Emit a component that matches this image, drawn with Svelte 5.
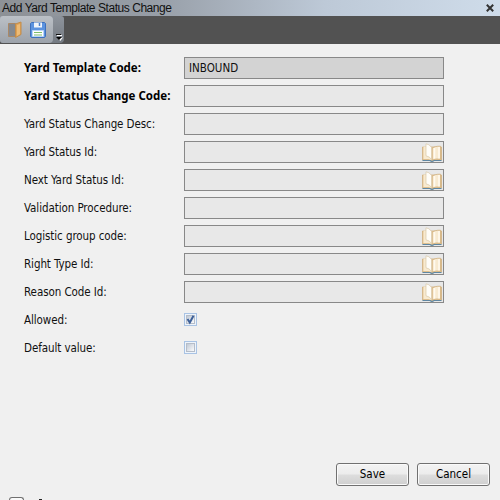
<script lang="ts">
type Field = { label: string; value?: string; bold?: boolean; readonly?: boolean; lookup?: boolean };

const fields: Field[] = [
  { label: 'Yard Template Code:', value: 'INBOUND', bold: true, readonly: true },
  { label: 'Yard Status Change Code:', bold: true },
  { label: 'Yard Status Change Desc:' },
  { label: 'Yard Status Id:', lookup: true },
  { label: 'Next Yard Status Id:', lookup: true },
  { label: 'Validation Procedure:' },
  { label: 'Logistic group code:', lookup: true },
  { label: 'Right Type Id:', lookup: true },
  { label: 'Reason Code Id:', lookup: true }
];

let allowed = $state(true);
let defaultValue = $state(false);
</script>

{#snippet book()}
  <svg class="book" width="20" height="19" viewBox="0 0 20 19">
    <path d="M0.5 4v13h7.5l2 1 2-1h7.5V4z" fill="#e6c898" stroke="#d0b080" stroke-width="0.8" />
    <path d="M0.5 17.5h7.5q2 1.6 4 0h7.5" fill="none" stroke="#5f87a3" stroke-width="1.2" />
    <path d="M1.5 3.5h4l4 2v11.500l-3-1h-5z" fill="#f8ead0" />
    <path d="M10.300 5.500q2-2.500 8.200-2.300v12.800q-5-.5-8.200 1z" fill="#f8ead0" stroke="#cfac78" stroke-width="0.700" />
    <path d="M12.500 5v10.500M17 4v11.500" stroke="#fffaf0" stroke-width="1.500" />
    <path d="M4 0.800q3 .2 5.500 3.500v12Q7.500 13.500 4 12.800z" fill="#fffdf8" stroke="#d9c7a8" stroke-width="0.700" />
  </svg>
{/snippet}

{#snippet checkRow(label: string, checked: boolean, toggle: () => void)}
  <div class="row">
    <span class="label">{label}</span>
    <button class="check" aria-label={label} onclick={toggle}>
      <svg width="13" height="13" viewBox="0 0 13 13">
        <defs>
          <linearGradient id="box" x1="0" y1="0" x2="1" y2="1">
            <stop offset="0" stop-color="#bcc5d2" />
            <stop offset="1" stop-color="#ffffff" />
          </linearGradient>
        </defs>
        <rect x="0.5" y="0.5" width="12" height="12" fill="#eef4fb" stroke="#a9c3e4" />
        <rect x="2.5" y="2.5" width="8" height="8" fill="url(#box)" stroke="#b5bdc9" />
        {#if checked}
          <path d="M3.500 6l2.300 3.500L9.500 2.800" fill="none" stroke="#3d6099" stroke-width="2" />
        {/if}
      </svg>
    </button>
  </div>
{/snippet}

<div class="window">
  <header>
    <span class="title">Add Yard Template Status Change</span>
    <svg class="close" width="8" height="8" viewBox="0 0 8 8">
      <path d="M0.800 0.800l6.400 6.400M7.200 0.800L0.800 7.200" stroke="#333" stroke-width="2" />
    </svg>
  </header>

  <div class="toolbar">
    <div class="strip">
      <div class="tools">
        <svg width="16" height="18" viewBox="0 0 16 18">
          <path d="M1.500 15.500v-13h7v13z" fill="#85898f" stroke="#a98867" />
          <path d="M8.500 3l5.500-2v12.500l-5.500 3z" fill="#dfa255" stroke="#c08c4d" />
          <path d="M10 4l3-1v10l-3 2z" fill="#edbb76" />
        </svg>
        <svg width="16" height="16" viewBox="0 0 16 16">
          <path d="M1.500 0.500h13l1 1v13l-1 1h-13l-1-1v-13z" fill="#5c93df" stroke="#3d70bd" />
          <path d="M4 0.500h8v5H4z" fill="#f0f5fb" />
          <path d="M9.500 1v3" stroke="#4f83cb" stroke-width="1.500" />
          <path d="M2.500 8.500h11v6h-11z" fill="#fff" stroke="#b9d5f8" />
          <path d="M4 10.500h8M4 13h8" stroke="#7fbd6c" stroke-width="1.200" />
        </svg>
      </div>
      <svg class="overflow" width="7" height="7" viewBox="0 0 7 7">
        <path d="M1 1.500h5" stroke="#fff" />
        <path d="M0 0.500h5" stroke="#111" />
        <path d="M1.500 3.500h5.500L4.300 7z" fill="#fff" />
        <path d="M0 3h6L3 6z" fill="#000" />
      </svg>
    </div>
  </div>

  <main>
    {#each fields as field}
      <div class="row">
        <span class="label" class:bold={field.bold}>{field.label}</span>
        <div class="input" class:readonly={field.readonly}>
          <span>{field.value ?? ''}</span>
          {#if field.lookup}
            {@render book()}
          {/if}
        </div>
      </div>
    {/each}
    {@render checkRow('Allowed:', allowed, () => (allowed = !allowed))}
    {@render checkRow('Default value:', defaultValue, () => (defaultValue = !defaultValue))}
  </main>

  <footer>
    <button>Save</button>
    <button>Cancel</button>
  </footer>

  <div class="below">
    <span class="box"></span>
    <span class="tick"></span>
  </div>
</div>

<style>
:global(body) {
  margin: 0;
  overflow: hidden;
}
.window {
  width: 500px;
  height: 500px;
  display: flex;
  flex-direction: column;
  overflow: hidden;
  background: #f0f0f0;
  color: #101010;
  font-family: "DejaVu Sans Condensed", "DejaVu Sans", sans-serif;
  font-stretch: condensed;
  font-size: 11.5px;
}
header {
  height: 16px;
  flex: none;
  display: flex;
  justify-content: space-between;
  align-items: center;
  padding: 0 6px 0 2px;
  box-sizing: border-box;
  background: linear-gradient(90deg, #8d9196 0%, #969da6 30%, #bdc9d7 65%, #cfdcea 100%);
}
.title {
  font: 12px/16px "Liberation Sans", Arial, sans-serif;
  letter-spacing: -0.45px;
  white-space: nowrap;
}
.toolbar {
  height: 28px;
  flex: none;
  background: #525252;
}
.strip {
  width: 64px;
  height: 27px;
  display: flex;
  align-items: flex-end;
  border-radius: 0 3px 4px 3px;
  background: linear-gradient(#8e949c, #747a82);
}
.tools {
  width: 53px;
  height: 27px;
  display: flex;
  align-items: center;
  gap: 7px;
  padding-left: 7px;
  box-sizing: border-box;
  border-radius: 3px 4px 4px 3px;
  background: linear-gradient(#bcc1c7, #9ca2aa);
}
.overflow {
  margin: 0 0 2px 3px;
}
main {
  padding: 10px 0 0 24px;
}
.row {
  height: 28px;
  display: flex;
  align-items: center;
}
.label {
  width: 160px;
  letter-spacing: -0.08px;
  white-space: nowrap;
}
.bold {
  padding-bottom: 2px;
  font-family: "Noto Sans", Tahoma, sans-serif;
  font-weight: bold;
  letter-spacing: 0;
  color: #000;
}
.input {
  width: 260px;
  height: 22px;
  box-sizing: border-box;
  display: flex;
  align-items: center;
  justify-content: space-between;
  padding: 0 1px 0 4px;
  border: 1px solid #888;
  background: #e8e8e8;
}
.readonly {
  background: #d3d3d3;
}
.check {
  padding: 0 0 2px;
  border: 0;
  background: none;
  line-height: 0;
}
footer {
  display: flex;
  gap: 8px;
  margin: 101px 0 0 336px;
}
footer button {
  width: 73px;
  height: 23px;
  padding: 0 0 1px;
  border: 1px solid #707070;
  border-radius: 3px;
  box-shadow: inset 0 0 0 1px #fafafa;
  background: linear-gradient(#f3f3f3 0%, #ececec 48%, #dddddd 52%, #cfcfcf 100%);
  color: #000;
  font: inherit;
}
.below {
  height: 3px;
  margin-top: 11px;
  display: flex;
  align-items: flex-end;
  padding-left: 9px;
  overflow: hidden;
}
.box {
  width: 13px;
  height: 2px;
  border: 1px solid #707070;
  border-bottom: 0;
  border-radius: 3px 3px 0 0;
  background: #fafafa;
}
.tick {
  width: 3px;
  height: 1px;
  margin-left: 15px;
  background: #222;
}
</style>
